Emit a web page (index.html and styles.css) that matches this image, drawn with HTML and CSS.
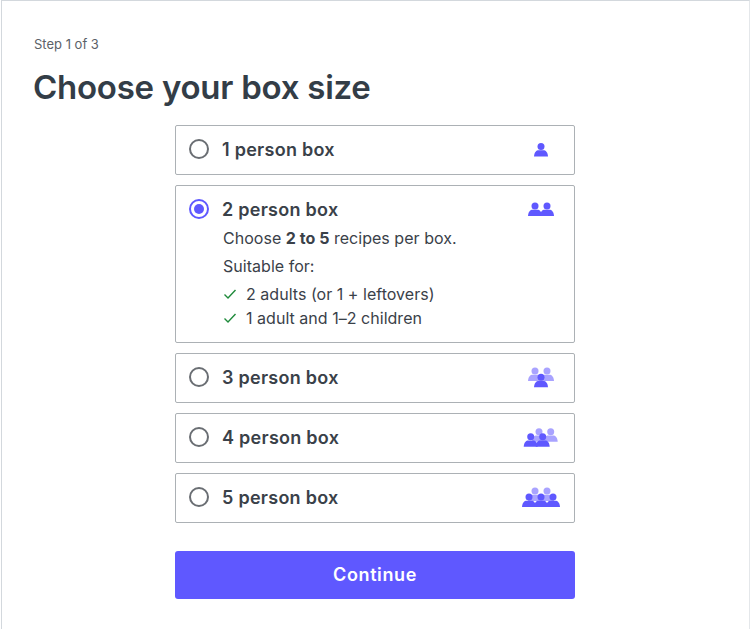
FILE: index.html
```html
<!DOCTYPE html>
<html lang="en">
<head>
<meta charset="utf-8">
<title>Choose your box size</title>
<link rel="stylesheet" href="styles.css">
</head>
<body>
<svg class="defs" width="0" height="0" aria-hidden="true"><defs>
<symbol id="p" viewBox="0 0 14 14" overflow="visible"><circle cx="7" cy="3.5" r="3.5"/><path d="M0 13.5C.3 9 2.5 7.3 4.5 7.3h5c2 0 4.2 1.7 4.5 6.2z"/></symbol>
</defs></svg>
<main class="page">
  <p class="step">Step 1 of 3</p>
  <h1 class="title">Choose your box size</h1>
  <div class="options">
    <div class="card">
      <div class="row">
        <span class="radio"></span><span class="name">1 person box</span>
        <svg class="icon" viewBox="0 0 40 24"><use href="#p" class="dark" x="13" y="5" width="14" height="14"/></svg>
      </div>
    </div>
    <div class="card open">
      <div class="row">
        <span class="radio on"></span><span class="name">2 person box</span>
        <svg class="icon" viewBox="0 0 40 24"><use href="#p" class="dark" x="7" y="4.5" width="14" height="14"/><use href="#p" class="dark" x="19" y="4.5" width="14" height="14"/></svg>
      </div>
      <div class="details">
        <p class="line">Choose <b>2 to 5</b> recipes per box.</p>
        <p class="line">Suitable for:</p>
        <ul class="checks">
          <li><svg class="tick" viewBox="0 0 14 14"><path d="M1.5 7.5l3.5 3.5 7.5-8"/></svg>2 adults (or 1 + leftovers)</li>
          <li><svg class="tick" viewBox="0 0 14 14"><path d="M1.5 7.5l3.5 3.5 7.5-8"/></svg>1 adult and 1–2 children</li>
        </ul>
      </div>
    </div>
    <div class="card">
      <div class="row">
        <span class="radio"></span><span class="name">3 person box</span>
        <svg class="icon" viewBox="0 0 40 24"><use href="#p" class="light" x="7" y="1.5" width="14" height="14"/><use href="#p" class="light" x="19" y="1.5" width="14" height="14"/><use href="#p" class="dark" x="13" y="7.8" width="14" height="14"/></svg>
      </div>
    </div>
    <div class="card">
      <div class="row">
        <span class="radio"></span><span class="name">4 person box</span>
        <svg class="icon" viewBox="0 0 40 24"><use href="#p" class="light" x="11" y="2.2" width="14" height="14"/><use href="#p" class="light" x="22.7" y="2.2" width="14" height="14"/><use href="#p" class="dark" x="2.7" y="7.2" width="14" height="14"/><use href="#p" class="dark" x="14.7" y="7.2" width="14" height="14"/></svg>
      </div>
    </div>
    <div class="card">
      <div class="row">
        <span class="radio"></span><span class="name">5 person box</span>
        <svg class="icon" viewBox="0 0 40 24"><use href="#p" class="light" x="7" y="1.5" width="14" height="14"/><use href="#p" class="light" x="19" y="1.5" width="14" height="14"/><use href="#p" class="dark" x="1" y="7.5" width="14" height="14"/><use href="#p" class="dark" x="13" y="7.5" width="14" height="14"/><use href="#p" class="dark" x="25" y="7.5" width="14" height="14"/></svg>
      </div>
    </div>
    <button class="continue" type="button">Continue</button>
  </div>
</main>
</body>
</html>
```
FILE: styles.css
```css
* { box-sizing: border-box; }
html, body { margin: 0; padding: 0; background: #fff; }
body { font-family: "Inter", "Liberation Sans", sans-serif; color: #333d47; overflow: hidden; }
.defs { position: absolute; }
.page {
  margin-left: 1px;
  width: 749px;
  height: 629px;
  border: 1px solid #d3d8dd;
  border-bottom: 0;
  border-right-color: #e4e7ea;
  padding: 34px 32px 0;
}
.step { margin: 0; font-size: 13px; line-height: 18px; color: #5c6168; }
.title { margin: 14px 0 18px -1px; font-size: 33px; line-height: 40px; font-weight: 600; letter-spacing: -.25px; color: #333d47; }
.options { width: 400px; margin-left: 141px; display: flex; flex-direction: column; gap: 10px; }
.card { border: 1px solid #acb1b5; border-radius: 2px; background: #fff; }
.row { display: flex; align-items: center; height: 48px; padding: 0 13px 2px; }
.radio { width: 20px; height: 20px; border: 2px solid #6a6e73; border-radius: 50%; display: flex; align-items: center; justify-content: center; flex: none; }
.radio.on { border-color: #5f58ff; }
.radio.on::after { content: ""; width: 10px; height: 10px; border-radius: 50%; background: #5f58ff; }
.name { margin-left: 13px; font-size: 18px; font-weight: 600; letter-spacing: .27px; color: #3a4149; flex: 1; }
.icon { width: 40px; height: 24px; flex: none; margin-top: 2px; }
.dark { fill: #5f58ff; }
.light { fill: #a9a3ff; }
.open { height: 158px; }
.details { margin-top: -8px; padding-left: 47px; font-size: 16px; line-height: 24px; color: #3a4149; letter-spacing: .03px; }
.line { margin: 0 0 4px; }
.line b { font-weight: 700; }
.checks { list-style: none; margin: 0; padding: 0; }
.checks li { display: flex; align-items: center; }
.tick { width: 14px; height: 14px; margin-right: 9px; fill: none; stroke: #1f8a3b; stroke-width: 1.4; }
.continue {
  margin-top: 18px;
  height: 48px;
  padding: 0 0 2px;
  border: 0;
  border-radius: 3px;
  background: #5f58ff;
  color: #fff;
  font: 600 18px "Inter", "Liberation Sans", sans-serif;
  letter-spacing: .6px;
}
```
